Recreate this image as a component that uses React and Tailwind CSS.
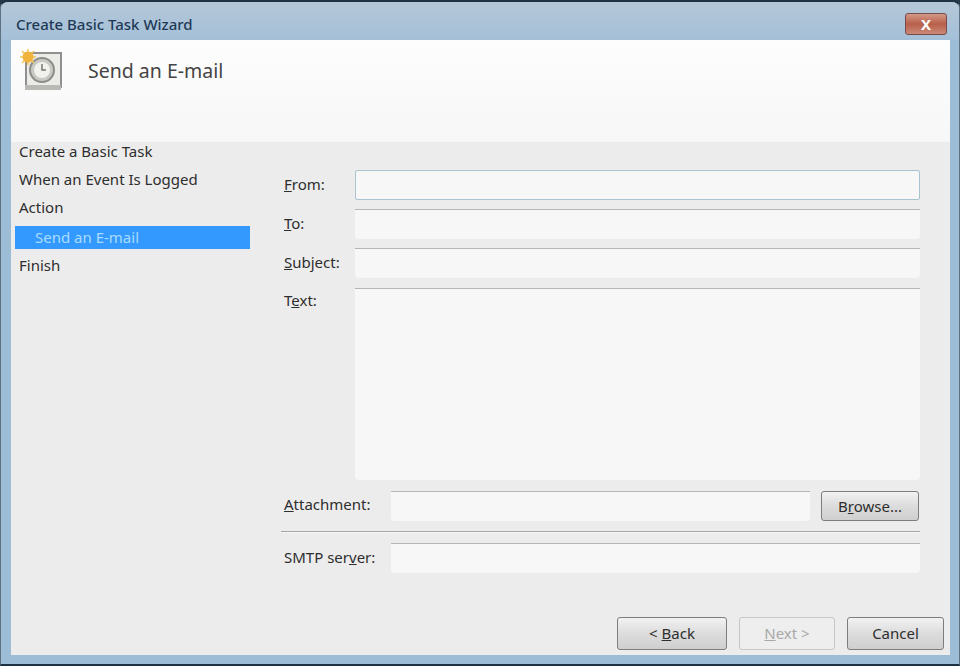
const steps = [
  { label: 'Create a Basic Task' },
  { label: 'When an Event Is Logged' },
  { label: 'Action' },
  { label: 'Send an E-mail', active: true },
  { label: 'Finish' },
]

const font = { fontFamily: '"Noto Sans", sans-serif' }

const Field = ({ className = '' }) => (
  <div className={`bg-[#f7f7f7] border-t border-t-[#b4b6b6] rounded-br-[4px] rounded-bl-[4px] ${className}`} />
)

const Label = ({ pre, mnemonic, post, className = '' }) => (
  <span className={`text-[15px] leading-5 text-[#2e2e2e] ${className}`}>
    {pre}<span className="underline">{mnemonic}</span>{post}
  </span>
)

const ClockIcon = () => (
  <svg width="46" height="46" viewBox="0 0 46 46">
    <rect x="8" y="5" width="35" height="34" fill="#ebebe8" stroke="#8f8f8f" strokeWidth="2" />
    <rect x="7" y="37" width="36" height="5" fill="#b9b9b6" />
    <circle cx="24" cy="22" r="12" fill="#c9c9c4" stroke="#8d8d88" strokeWidth="2" />
    <circle cx="24" cy="22" r="8" fill="#f1f1ee" />
    <path d="M24 16v6h4" fill="none" stroke="#77776f" strokeWidth="1.5" />
    <path d="M10 1v16M2 9h16M4 3l12 12M16 3L4 15" stroke="#f3c355" strokeWidth="1.5" />
    <circle cx="10" cy="9" r="5.5" fill="#f0b43c" />
  </svg>
)

const Button = ({ children, disabled, className = '' }) => (
  <div
    className={`flex items-center justify-center rounded-[3px] border text-[15px] ${
      disabled
        ? 'border-[#c6c6c6] bg-[#eeeeee] text-[#a8a8a8]'
        : 'border-[#7d7d7d] bg-linear-to-b from-[#f2f2f2] via-[#dcdcdc] to-[#cfcfcf] text-[#2e2e2e]'
    } ${className}`}
  >
    {children}
  </div>
)

const App = () => {
  return (
    <div className="w-[960px] h-[666px] bg-[#24384a]">
      <div style={font} className="w-full h-full overflow-hidden flex flex-col bg-[#9dbdd6] border-t-2 border-b-2 border-x border-t-[#1f3243] border-b-[#1f3243] border-x-[#5f7282] rounded-t-[8px]">
        {/* title bar */}
        <div className="h-[38px] shrink-0 flex items-center justify-between pl-[15px] pr-[12px] pt-[6px] bg-linear-to-b from-[#b4c7d8] to-[#a4c0d8]">
          <span className="text-[15px] font-medium text-[#1f3a57]">Create Basic Task Wizard</span>
          <div className="w-[42px] h-[22px] flex items-center justify-center rounded-[3px] border border-[#7a4a4a] bg-linear-to-b from-[#d39a88] via-[#b75f4a] to-[#c98a78] text-white text-[15px] font-bold leading-none">
            X
          </div>
        </div>

        <div className="flex-1 min-h-0 flex flex-col ml-[10px] mr-[9px] mb-[9px]">
          {/* header */}
          <div className="h-[102px] shrink-0 bg-linear-to-b from-[#fdfdfd] to-[#f7f7f7] flex items-start pl-[7px] pt-[8px]">
            <ClockIcon />
            <span className="ml-[24px] mt-[9px] text-[19.5px] leading-7 text-[#444]">Send an E-mail</span>
          </div>

          {/* body */}
          <div className="flex-1 min-h-0 flex flex-col bg-[#ececec]">
            <div className="flex-1 min-h-0 flex">
              <div className="w-[239px] shrink-0 pl-[4px] -mt-[5px] flex flex-col">
                {steps.map((step) =>
                  step.active ? (
                    <div key={step.label} className="h-[23px] mt-[5px] mb-[2px] flex items-center pl-[20px] bg-[#3399ff] text-[15px] text-[#a9dcff]">
                      {step.label}
                    </div>
                  ) : (
                    <div key={step.label} className="h-[28px] flex items-center pl-[4px] text-[15px] text-[#2e2e2e]">
                      {step.label}
                    </div>
                  )
                )}
              </div>

              <div className="flex-1 min-w-0 pl-[34px] pr-[30px] pt-[28px] flex flex-col">
                <div className="flex items-center h-[30px] mb-[9px]">
                  <Label mnemonic="F" post="rom:" className="w-[71px] pb-[3px]" />
                  <div className="flex-1 h-full bg-[#f7f7f7] border border-[#a9c3cf] rounded-[2px]" />
                </div>
                <div className="flex items-center h-[30px] mb-[9px]">
                  <Label mnemonic="T" post="o:" className="w-[71px] pb-[2px]" />
                  <Field className="flex-1 h-full" />
                </div>
                <div className="flex items-center h-[30px] mb-[10px]">
                  <Label mnemonic="S" post="ubject:" className="w-[71px] pb-[3px]" />
                  <Field className="flex-1 h-full" />
                </div>
                <div className="flex items-start h-[192px] mb-[11px]">
                  <Label pre="T" mnemonic="e" post="xt:" className="w-[71px] pt-[2px]" />
                  <Field className="flex-1 h-full" />
                </div>
                <div className="flex items-center h-[30px]">
                  <Label mnemonic="A" post="ttachment:" className="w-[107px] pb-[4px]" />
                  <Field className="w-[419px] h-full" />
                  <Button className="ml-[11px] w-[98px] h-full">
                    <span>B<span className="underline">r</span>owse...</span>
                  </Button>
                </div>
                <div className="h-[2px] -ml-[3px] border-t border-b border-t-[#a6a6a6] border-b-[#f6f6f6] mt-[10px] mb-[10px]" />
                <div className="flex items-center h-[30px]">
                  <Label pre="SMTP ser" mnemonic="v" post="er:" className="w-[107px] pb-[2px]" />
                  <Field className="flex-1 h-full" />
                </div>
              </div>
            </div>

            {/* footer buttons */}
            <div className="h-[33px] mb-[5px] shrink-0 flex justify-end pr-[6px]">
              <Button className="w-[110px]">
                <span>&lt; <span className="underline">B</span>ack</span>
              </Button>
              <Button disabled className="ml-[12px] w-[96px]">
                <span><span className="underline">N</span>ext &gt;</span>
              </Button>
              <Button className="ml-[12px] w-[97px]">Cancel</Button>
            </div>
          </div>
        </div>
      </div>
    </div>
  )
}

export default App
